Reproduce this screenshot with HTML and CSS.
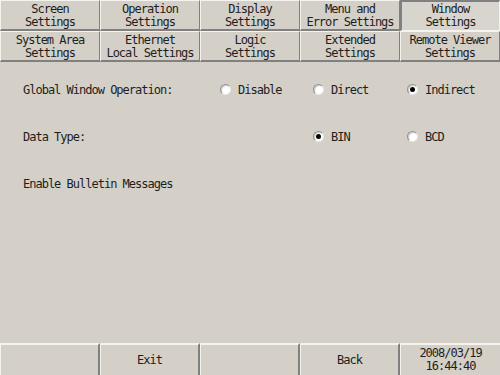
FILE: index.html
```html
<!DOCTYPE html>
<html lang="en">
<head>
  <meta charset="UTF-8">
  <title>Window Settings</title>
  <link rel="stylesheet" href="styles.css">
</head>
<body>
  <div class="screen">
    <div class="tabs">
      <div class="tab">Screen<br>Settings</div>
      <div class="tab">Operation<br>Settings</div>
      <div class="tab">Display<br>Settings</div>
      <div class="tab">Menu and<br>Error Settings</div>
      <div class="tab active">Window<br>Settings</div>
      <div class="tab">System Area<br>Settings</div>
      <div class="tab">Ethernet<br>Local Settings</div>
      <div class="tab">Logic<br>Settings</div>
      <div class="tab">Extended<br>Settings</div>
      <div class="tab">Remote Viewer<br>Settings</div>
    </div>

    <div class="content">
      <div class="setting-row">
        <span class="label">Global Window Operation:</span>
        <span class="option"><span class="radio"></span>Disable</span>
        <span class="option"><span class="radio"></span>Direct</span>
        <span class="option"><span class="radio checked"></span>Indirect</span>
      </div>
      <div class="setting-row">
        <span class="label">Data Type:</span>
        <span class="option"></span>
        <span class="option"><span class="radio checked"></span>BIN</span>
        <span class="option"><span class="radio"></span>BCD</span>
      </div>
      <div class="setting-row">
        <span class="label">Enable Bulletin Messages</span>
      </div>
    </div>

    <div class="footer">
      <div class="foot-btn"></div>
      <div class="foot-btn">Exit</div>
      <div class="foot-btn"></div>
      <div class="foot-btn">Back</div>
      <div class="foot-btn clock">2008/03/19<br>16:44:40</div>
    </div>
  </div>
</body>
</html>
```

FILE: styles.css
```css
body {
  margin: 0;
  background-color: #d4d0c8;
  color: #1e1e1e;
  font-family: 'DejaVu Sans Mono', 'Liberation Mono', monospace;
  font-size: 12px;
  letter-spacing: -1px;
}

.screen {
  width: 500px;
  height: 375px;
  display: flex;
  flex-direction: column;
}

.tabs {
  display: grid;
  grid-template-columns: repeat(5, 100px);
  grid-template-rows: 31px 31px;
}

.tab {
  box-sizing: border-box;
  border-top: 1px solid #f4f3f0;
  border-left: 1px solid #f4f3f0;
  border-right: 1px solid #808080;
  border-bottom: 2px solid #808080;
  text-align: center;
  line-height: 13px;
  padding-top: 2px;
}

.tab.active {
  border-top: 2px solid #808080;
  border-left: 2px solid #808080;
  border-right: 1px solid #f4f3f0;
  border-bottom: 1px solid #f4f3f0;
  padding-top: 1px;
  background-color: #d8d5ce;
}

.content {
  flex: 1;
  padding: 4px 0 0 23px;
}

.setting-row {
  display: grid;
  grid-template-columns: 197px 93px 94px 94px;
  height: 47px;
  align-items: center;
}

.option {
  display: flex;
  align-items: center;
  gap: 7px;
}

.radio {
  box-sizing: border-box;
  width: 11px;
  height: 11px;
  border-radius: 50%;
  background-color: #fff;
  border: 1px solid;
  border-color: #909090 #e8e8e8 #e8e8e8 #909090;
  box-shadow: inset 1px 1px 1px #c8c8c8;
  display: flex;
  align-items: center;
  justify-content: center;
}

.radio.checked::after {
  content: "";
  width: 5px;
  height: 5px;
  border-radius: 50%;
  background-color: #000;
}

.footer {
  display: grid;
  grid-template-columns: repeat(5, 100px);
  height: 32px;
}

.foot-btn {
  box-sizing: border-box;
  border-top: 2px solid #f4f3f0;
  border-left: 1px solid #f4f3f0;
  border-right: 2px solid #808080;
  display: flex;
  align-items: center;
  justify-content: center;
  text-align: center;
  line-height: 13px;
}

.clock {
  border-right: none;
}
```
